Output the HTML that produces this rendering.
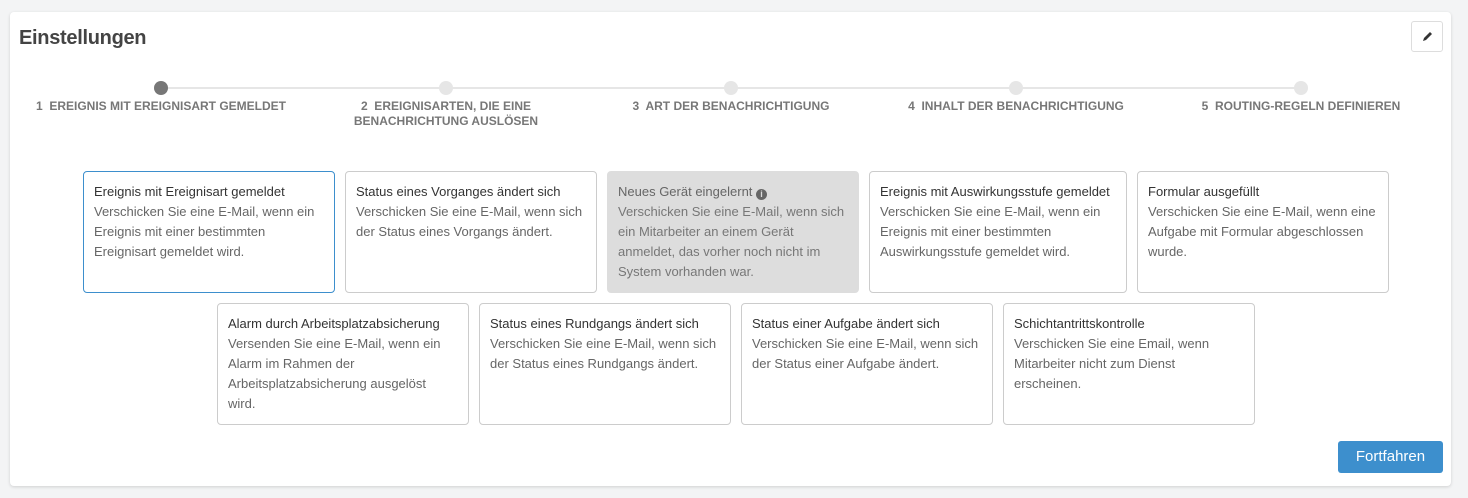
<!DOCTYPE html>
<html><head><style>
body{margin:0;width:1468px;height:498px;background:#f3f4f5;font-family:"Liberation Sans",sans-serif;position:relative;overflow:hidden}
.main{position:absolute;left:10px;top:12px;width:1441px;height:474px;background:#fff;border-radius:4px;box-shadow:0 1px 3px rgba(0,0,0,.15)}
h1{position:absolute;left:19px;top:27px;margin:0;font-size:20px;font-weight:bold;color:#444;letter-spacing:-.3px}
.edit{position:absolute;left:1411px;top:21px;width:30px;height:29px;border:1px solid #ddd;border-radius:3px;background:#fff}
.line{position:absolute;left:161px;top:87px;width:1140px;height:2px;background:#e6e6e6}
.dot{position:absolute;top:81px;width:14px;height:14px;border-radius:50%;background:#e6e6e6;margin-left:-7px}
.lbl{position:absolute;top:99px;width:280px;margin-left:-140px;text-align:center;font-size:12px;font-weight:bold;color:#777;line-height:15px}
.c{position:absolute;box-sizing:border-box;height:122px;border:1px solid #ccc;border-radius:4px;padding:10px;font-size:13px;line-height:20px;color:#666;white-space:nowrap}
.c b{display:block;font-weight:normal;color:#333;font-size:13px}
.btn{position:absolute;left:1338px;top:441px;width:105px;height:32px;background:#3d8fcd;border-radius:3px;color:#fff;font-size:15px;text-align:center;line-height:32px}
</style></head><body>
<div class="main"></div>
<h1>Einstellungen</h1>
<div class="edit"><svg width="30" height="29" viewBox="0 0 30 29"><path d="M11 19l1-3 6-6 2 2-6 6z" fill="#333"/></svg></div>
<div class="line"></div>
<div class="dot" style="left:161px;background:#777"></div>
<div class="dot" style="left:446px"></div>
<div class="dot" style="left:731px"></div>
<div class="dot" style="left:1016px"></div>
<div class="dot" style="left:1301px"></div>
<div class="lbl" style="left:161px">1&nbsp; EREIGNIS MIT EREIGNISART GEMELDET</div>
<div class="lbl" style="left:446px">2&nbsp; EREIGNISARTEN, DIE EINE<br>BENACHRICHTUNG AUSLÖSEN</div>
<div class="lbl" style="left:731px">3&nbsp; ART DER BENACHRICHTIGUNG</div>
<div class="lbl" style="left:1016px">4&nbsp; INHALT DER BENACHRICHTIGUNG</div>
<div class="lbl" style="left:1301px">5&nbsp; ROUTING-REGELN DEFINIEREN</div>

<div class="c" style="left:83px;top:171px;width:252px;border-color:#3d8fcd"><b>Ereignis mit Ereignisart gemeldet</b>Verschicken Sie eine E-Mail, wenn ein<br>Ereignis mit einer bestimmten<br>Ereignisart gemeldet wird.</div>
<div class="c" style="left:345px;top:171px;width:252px"><b>Status eines Vorganges ändert sich</b>Verschicken Sie eine E-Mail, wenn sich<br>der Status eines Vorgangs ändert.</div>
<div class="c" style="left:607px;top:171px;width:252px;background:#ddd;border-color:#ddd;color:#777"><b style="color:#666">Neues Gerät eingelernt <span style="display:inline-block;width:11px;height:11px;border-radius:50%;background:#666;color:#ddd;font-size:9px;line-height:11px;text-align:center;font-weight:bold;vertical-align:-1px">i</span></b>Verschicken Sie eine E-Mail, wenn sich<br>ein Mitarbeiter an einem Gerät<br>anmeldet, das vorher noch nicht im<br>System vorhanden war.</div>
<div class="c" style="left:869px;top:171px;width:258px"><b>Ereignis mit Auswirkungsstufe gemeldet</b>Verschicken Sie eine E-Mail, wenn ein<br>Ereignis mit einer bestimmten<br>Auswirkungsstufe gemeldet wird.</div>
<div class="c" style="left:1137px;top:171px;width:252px"><b>Formular ausgefüllt</b>Verschicken Sie eine E-Mail, wenn eine<br>Aufgabe mit Formular abgeschlossen<br>wurde.</div>
<div class="c" style="left:217px;top:303px;width:252px"><b>Alarm durch Arbeitsplatzabsicherung</b>Versenden Sie eine E-Mail, wenn ein<br>Alarm im Rahmen der<br>Arbeitsplatzabsicherung ausgelöst<br>wird.</div>
<div class="c" style="left:479px;top:303px;width:252px"><b>Status eines Rundgangs ändert sich</b>Verschicken Sie eine E-Mail, wenn sich<br>der Status eines Rundgangs ändert.</div>
<div class="c" style="left:741px;top:303px;width:252px"><b>Status einer Aufgabe ändert sich</b>Verschicken Sie eine E-Mail, wenn sich<br>der Status einer Aufgabe ändert.</div>
<div class="c" style="left:1003px;top:303px;width:252px"><b>Schichtantrittskontrolle</b>Verschicken Sie eine Email, wenn<br>Mitarbeiter nicht zum Dienst<br>erscheinen.</div>
<div class="btn">Fortfahren</div>
</body></html>
